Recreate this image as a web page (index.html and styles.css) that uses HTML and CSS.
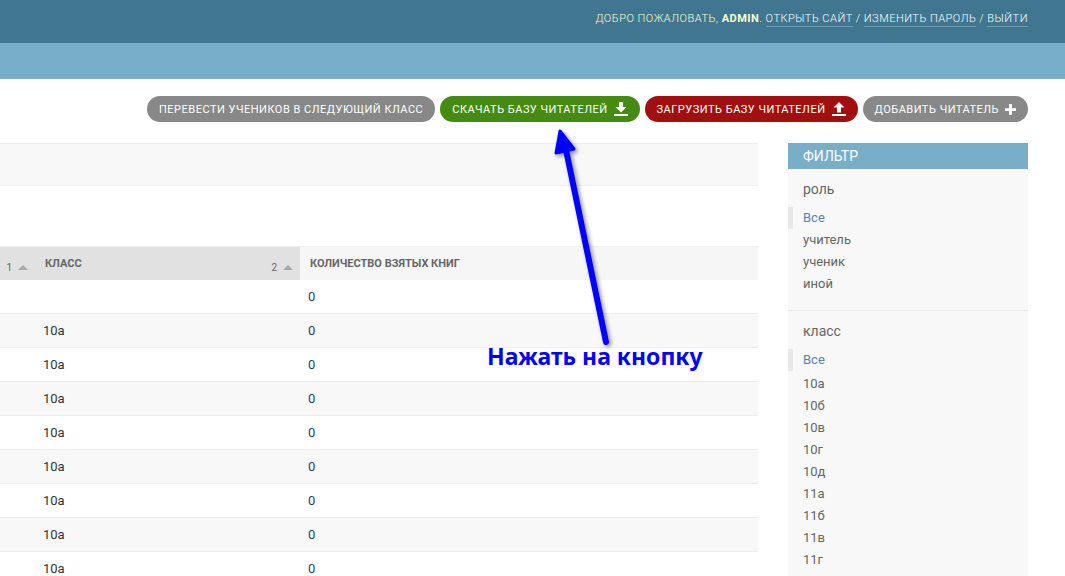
FILE: index.html
```html
<!DOCTYPE html>
<html lang="ru">
<head>
    <meta charset="UTF-8">
    <meta name="viewport" content="width=device-width, initial-scale=1.0">
    <title>Читатели</title>
    <link rel="stylesheet" href="styles.css">
</head>
<body>
    <header class="site-header">
        <div class="user-tools">
            Добро пожаловать, <strong>admin</strong>.
            <a href="#">Открыть сайт</a> /
            <a href="#">Изменить пароль</a> /
            <a href="#">Выйти</a>
        </div>
    </header>
    <div class="breadcrumbs"></div>

    <div class="object-tools">
        <a class="tool tool-grey" href="#">Перевести учеников в следующий класс</a>
        <a class="tool tool-green" href="#">Скачать базу читателей
            <svg class="tool-icon" viewBox="0 0 14 14"><path d="M5 0h4v5h3.5L7 10.5 1.500 5H5z"/><rect y="12" width="14" height="2"/></svg>
        </a>
        <a class="tool tool-red" href="#">Загрузить базу читателей
            <svg class="tool-icon" viewBox="0 0 14 14"><path d="M5 10.500h4v-5h3.500L7 0 1.500 5.500H5z"/><rect y="12" width="14" height="2"/></svg>
        </a>
        <a class="tool tool-grey" href="#">Добавить читатель
            <svg class="tool-icon icon-plus" viewBox="0 0 12 12"><path d="M4.500 0h3v4.500H12v3H7.500V12h-3V7.500H0v-3h4.500z"/></svg>
        </a>
    </div>

    <div class="changelist">
        <main class="results">
            <div class="toolbar"></div>
            <div class="actions"></div>
            <table class="result-table">
                <thead>
                    <tr>
                        <th class="col-first sorted"><span class="sort"><span class="sort-num">1</span><i class="sort-up"></i></span></th>
                        <th class="col-class sorted">Класс<span class="sort"><span class="sort-num">2</span><i class="sort-up"></i></span></th>
                        <th>Количество взятых книг</th>
                    </tr>
                </thead>
                <tbody>
                    <tr><td></td><td></td><td><a href="#">0</a></td></tr>
                    <tr><td></td><td>10а</td><td><a href="#">0</a></td></tr>
                    <tr><td></td><td>10а</td><td><a href="#">0</a></td></tr>
                    <tr><td></td><td>10а</td><td><a href="#">0</a></td></tr>
                    <tr><td></td><td>10а</td><td><a href="#">0</a></td></tr>
                    <tr><td></td><td>10а</td><td><a href="#">0</a></td></tr>
                    <tr><td></td><td>10а</td><td><a href="#">0</a></td></tr>
                    <tr><td></td><td>10а</td><td><a href="#">0</a></td></tr>
                    <tr><td></td><td>10а</td><td><a href="#">0</a></td></tr>
                </tbody>
            </table>
        </main>

        <aside class="filter">
            <h2>Фильтр</h2>
            <h3>роль</h3>
            <ul>
                <li class="selected"><a href="#">Все</a></li>
                <li><a href="#">учитель</a></li>
                <li><a href="#">ученик</a></li>
                <li><a href="#">иной</a></li>
            </ul>
            <h3>класс</h3>
            <ul>
                <li class="selected wide"><a href="#">Все</a></li>
                <li><a href="#">10а</a></li>
                <li><a href="#">10б</a></li>
                <li><a href="#">10в</a></li>
                <li><a href="#">10г</a></li>
                <li><a href="#">10д</a></li>
                <li><a href="#">11а</a></li>
                <li><a href="#">11б</a></li>
                <li><a href="#">11в</a></li>
                <li><a href="#">11г</a></li>
                <li><a href="#">1а</a></li>
            </ul>
        </aside>
    </div>

    <!-- annotation drawn on top of the screenshot -->
    <svg class="note-arrow" viewBox="0 0 1065 576">
        <path d="M606 342 L566 150" stroke="#0000ff" stroke-width="6" stroke-linecap="round" fill="none"/>
        <path d="M560 131 L574 149 L556 153 Z" fill="#0000ff" stroke="#0000ff" stroke-width="3" stroke-linejoin="round"/>
    </svg>
    <div class="note-text">Нажать на кнопку</div>
</body>
</html>
```

FILE: styles.css
```css
html, body {
    height: 576px;
    overflow: hidden;
}
body {
    margin: 0;
    position: relative;
    font-family: 'Roboto', 'Liberation Sans', sans-serif;
    font-size: 13px;
    color: #333;
    background: #fff;
}
a {
    color: inherit;
    text-decoration: none;
}

.site-header {
    height: 43px;
    box-sizing: border-box;
    padding: 12px 37px 0 0;
    background: #417690;
    color: #ffc;
}
.user-tools {
    text-align: right;
    font-size: 11px;
    line-height: 14px;
    letter-spacing: 0.5px;
    text-transform: uppercase;
    font-weight: 300;
}
.user-tools strong {
    font-weight: 700;
}
.user-tools a {
    color: #fff;
    border-bottom: 1px solid rgba(255, 255, 255, 0.25);
    padding-bottom: 1px;
}
.breadcrumbs {
    height: 36px;
    background: #79aec8;
}

.object-tools {
    display: flex;
    justify-content: flex-end;
    gap: 5px;
    padding: 17px 37px 0 0;
    height: 26px;
}
.tool {
    display: flex;
    align-items: center;
    gap: 6px;
    padding: 0 12px;
    border-radius: 13px;
    color: #fff;
    font-size: 11px;
    letter-spacing: 0.5px;
    text-transform: uppercase;
}
.tool-grey { background: #888; }
.tool-green { background: #458b12; }
.tool-red { background: #a20f0f; }
.tool-icon {
    width: 14px;
    height: 14px;
    fill: #fff;
}
.icon-plus {
    width: 11px;
    height: 11px;
}

.changelist {
    display: flex;
    align-items: flex-start;
    gap: 30px;
    padding: 21px 37px 0 0;
}
.results {
    width: 758px;
}
.toolbar {
    height: 41px;
    background: #f8f8f8;
    border-top: 1px solid #eee;
    border-bottom: 1px solid #eee;
}
.actions {
    height: 60px;
}
.result-table {
    width: 100%;
    border-collapse: collapse;
    table-layout: fixed;
}
.result-table th {
    height: 33px;
    box-sizing: border-box;
    padding: 0 10px;
    background: #f6f6f6;
    border-top: 1px solid #eee;
    font-size: 11px;
    font-weight: 700;
    text-align: left;
    text-transform: uppercase;
    color: #666;
}
.result-table th.sorted {
    background: #e1e1e1;
}
.col-first {
    width: 35px;
}
.col-class {
    width: 265px;
}
.result-table th.col-class {
    position: relative;
}
.sort {
    position: absolute;
    right: 7px;
    top: 15px;
    display: flex;
    align-items: center;
    gap: 6px;
    font-size: 10px;
    font-weight: 400;
}
.result-table th.col-first {
    position: relative;
}
.sort-up {
    width: 0;
    height: 0;
    border-left: 5px solid transparent;
    border-right: 5px solid transparent;
    border-bottom: 5px solid #aaa;
}
.result-table td {
    height: 34px;
    box-sizing: border-box;
    padding: 0 8px;
    border-bottom: 1px solid #eee;
    font-size: 13px;
    color: #333;
}
.result-table tbody tr:nth-child(even) {
    background: #f8f8f8;
}
.result-table td a {
    color: #1f3f7a;
}

.filter {
    flex: none;
    width: 240px;
    height: 500px;
    background: #f8f8f8;
    color: #666;
}
.filter h2 {
    margin: 0;
    height: 26px;
    padding-left: 15px;
    background: #79aec8;
    color: #fff;
    font-size: 14px;
    font-weight: 400;
    line-height: 26px;
    text-transform: uppercase;
}
.filter h3 {
    margin: 0;
    padding: 11px 15px 0;
    font-size: 14px;
    font-weight: 400;
    line-height: 18px;
    color: #666;
}
.filter ul {
    margin: 0;
    padding: 9px 0 15px;
    list-style: none;
}
.filter ul:first-of-type {
    border-bottom: 1px solid #eaeaea;
}
.filter li {
    height: 22px;
    line-height: 22px;
    padding-left: 15px;
}
.filter li.selected {
    padding-left: 10px;
    border-left: 5px solid #e8e8e8;
    color: #5b80b2;
}
.filter li.wide {
    margin-bottom: 2px;
}

.note-arrow {
    position: absolute;
    left: 0;
    top: 0;
    width: 1065px;
    height: 576px;
    filter: drop-shadow(2px 2px 2px rgba(0, 0, 0, 0.45));
    pointer-events: none;
}
.note-text {
    position: absolute;
    left: 487px;
    top: 341px;
    font-family: 'Noto Sans', 'Open Sans', sans-serif;
    font-size: 23px;
    font-weight: 700;
    line-height: 30px;
    color: #0000ff;
    white-space: nowrap;
}
```
